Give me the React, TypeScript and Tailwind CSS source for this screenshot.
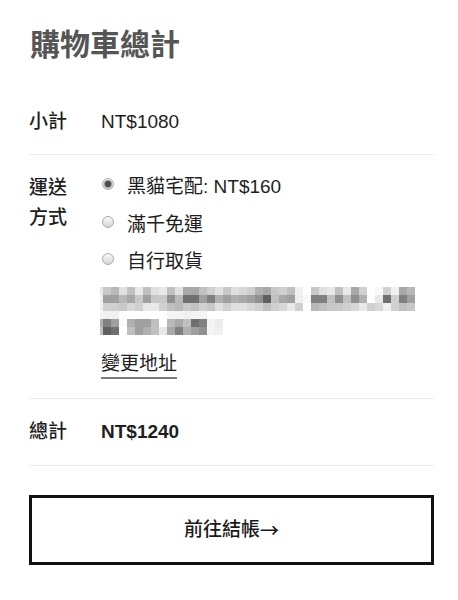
import React from "react";

const mosaic: string[][] = [
  ["e8","c8","b8","e0","c0","e8","c0","e0","e8","c0","e0","a8","a8","c0","d0","e0","c8","e0","d8","d0","b0","a8","c8","d0","c0","f0","ff","c8","e0","e8","c0","e8","a8","d0","ff","f8","d0","f0","a8","b8"],
  ["f0","a0","a0","b8","a8","c8","a0","c8","c8","90","b8","70","70","a0","80","b0","a0","b0","a8","a0","90","60","c0","a8","a0","f0","f8","80","80","c0","90","c0","90","b0","ff","e8","70","d0","80","a0"],
  ["f0","d0","d0","c8","d8","d0","e8","e8","d0","c0","b8","c8","c0","d0","c8","e0","d0","e0","e0","d8","d0","c0","d0","d8","e8","d0","ff","b8","c0","c8","c8","d0","d8","e8","d0","d8","f0","d0","c0","c8"],
  ["f4","f0","f0","ff","ff","ff","ff","ff","ff","f4","f4","f0","f4","f4","ff","ff"],
  ["b0","80","a0","fa","b0","a0","a0","c0","ff","b8","a8","c0","70","80","f4","ec"],
  ["c0","60","70","ff","c0","a0","b0","c0","e8","a8","80","b0","a0","90","f4","f0"],
];

function Mosaic() {
  return (
    <div className="flex flex-col ml-[-1px] mt-[11px]">
      {mosaic.map((row, r) => (
        <div key={r} className="flex h-[8px]">
          {row.map((v, c) => (
            <div
              key={c}
              className={c === 0 ? "w-[3px] h-[8px]" : "w-[8px] h-[8px]"}
              style={{ backgroundColor: `#${v}${v}${v}` }}
            />
          ))}
        </div>
      ))}
    </div>
  );
}

function Radio({ checked }: { checked?: boolean }) {
  return (
    <span className="mb-[6px] ml-[1px] mr-[13px] flex h-[12px] w-[12px] shrink-0 items-center justify-center rounded-full border border-[#aaaaaa] bg-gradient-to-b from-[#fafafa] to-[#d6d6d6]">
      {checked && (
        <span className="h-[6px] w-[6px] rounded-full bg-[#4a4a4a] ring-1 ring-[#9a9a9a]" />
      )}
    </span>
  );
}

export default function App() {
  return (
    <div className="h-[600px] w-[458px] bg-white pl-[29px] pt-[27px] font-['Liberation_Sans','Noto_Sans_CJK_TC',sans-serif] text-[19px] text-[#1e1e1e]">
      <div className="w-[405px]">
        <h2 className="pl-[1px] text-[30px] font-bold leading-[36px] text-[#555555]">
          購物車總計
        </h2>

        <div className="mt-[31px] flex border-b border-[#ececec] pb-[18px] pt-[14px] leading-[28px]">
          <div className="w-[72px] font-medium">小計</div>
          <div>NT$1080</div>
        </div>

        <div className="flex border-b border-[#ececec] pb-[19px] pt-[18px]">
          <div className="w-[72px] pr-[20px] font-medium leading-[30px]">運送方式</div>
          <div className="flex flex-col">
            <div className="flex flex-col gap-[9.5px] leading-[28px]">
              <label className="flex items-center">
                <Radio checked />
                <span>黑貓宅配: NT$160</span>
              </label>
              <label className="flex items-center">
                <Radio />
                <span>滿千免運</span>
              </label>
              <label className="flex items-center">
                <Radio />
                <span>自行取貨</span>
              </label>
            </div>
            <Mosaic />
            <div className="mt-[18px] flex">
              <span className="block border-b-2 border-[#7a7a7a] pb-[2px] leading-[22px]">
                變更地址
              </span>
            </div>
          </div>
        </div>

        <div className="flex border-b border-[#ececec] pb-[19px] pt-[19px] leading-[28px]">
          <div className="w-[72px] font-medium">總計</div>
          <div className="font-bold">NT$1240</div>
        </div>

        <button className="mt-[29px] flex h-[70px] w-[405px] items-center justify-center border-[3px] border-[#111111] bg-white font-medium text-[#1a1a1a]">
          前往結帳<span className="font-['Noto_Sans_CJK_TC',sans-serif]">→</span>
        </button>
      </div>
    </div>
  );
}
